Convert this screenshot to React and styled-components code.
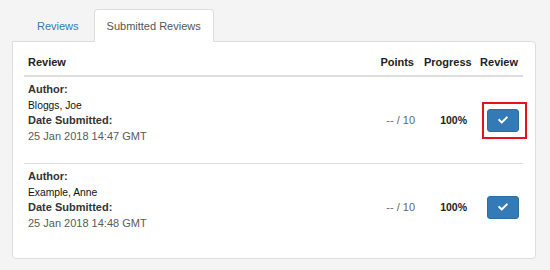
import React from "react";
import styled, { createGlobalStyle } from "styled-components";

const GlobalStyle = createGlobalStyle`
  body {
    margin: 0;
    background: #f4f4f4;
    font-family: "Liberation Sans", Arial, sans-serif;
    font-size: 11px;
    color: #333;
  }
`;

const Page = styled.div`
  padding: 9px 14px 0 12px;
`;

const TabList = styled.div`
  display: flex;
  gap: 2px;
  padding-left: 12px;
`;

const Tab = styled.div`
  position: relative;
  z-index: 1;
  height: 33px;
  box-sizing: border-box;
  padding: 0 12px;
  display: flex;
  align-items: center;
  margin-bottom: -1px;
  border: 1px solid ${(p) => (p.$active ? "#ddd" : "transparent")};
  border-bottom-color: ${(p) => (p.$active ? "#fff" : "transparent")};
  border-radius: 4px 4px 0 0;
  background: ${(p) => (p.$active ? "#fff" : "transparent")};
  color: ${(p) => (p.$active ? "#555" : "#337ab7")};
`;

const Panel = styled.div`
  background: #fff;
  border: 1px solid #ddd;
  border-radius: 0 4px 4px 4px;
  padding: 8px 12px 8px 11px;
`;

const Table = styled.div`
  display: grid;
  grid-template-columns: 1fr 43px 57px 47px;
`;

const HeadCell = styled.div`
  padding: 5px ${(p) => (p.$right ? "5px" : "0")} 5px ${(p) => (p.$right ? "0" : "4px")};
  line-height: 15px;
  font-weight: bold;
  color: #222;
  text-align: ${(p) => (p.$right ? "right" : "left")};
  border-bottom: 2px solid #ddd;
  white-space: nowrap;
`;

const HeadLeft = styled(HeadCell)`
  padding-left: ${(p) => (p.$pad ? p.$pad : "4px")};
  text-align: left;
`;

const Cell = styled.div`
  display: flex;
  align-items: center;
  justify-content: flex-end;
  padding-right: ${(p) => p.$pr || "4px"};
  border-bottom: ${(p) => (p.$last ? "none" : "1px solid #ddd")};
`;

const InfoCell = styled.div`
  padding: 5px 0 19px 4px;
  line-height: 15.5px;
  border-bottom: ${(p) => (p.$last ? "none" : "1px solid #ddd")};
`;

const Label = styled.div`
  font-weight: bold;
  color: #333;
`;

const Name = styled.div`
  color: #111;
  font-size: 10.3px;
`;

const DateText = styled.div`
  color: #5a5a5a;
`;

const Points = styled.span`
  color: #666;
`;

const Progress = styled.span`
  color: #222;
  font-weight: bold;
  font-size: 10.5px;
`;

const ButtonWrap = styled.div`
  position: relative;
`;

const Highlight = styled.div`
  position: absolute;
  left: -5px;
  right: -8px;
  top: -7px;
  bottom: -7px;
  border: 2px solid #e8101a;
  pointer-events: none;
`;

const ReviewButton = styled.button`
  width: 32px;
  height: 23px;
  padding: 0;
  background: #337ab7;
  border: 1px solid #2e6da4;
  border-radius: 3px;
  display: flex;
  align-items: center;
  justify-content: center;
  cursor: pointer;
`;

const CheckIcon = () => (
  <svg width="10" height="10" viewBox="0 0 512 512" fill="#fff">
    <path d="M173.898 439.404l-166.4-166.4c-9.997-9.997-9.997-26.206 0-36.204l36.203-36.204c9.997-9.998 26.207-9.998 36.204 0L192 312.69 432.095 72.596c9.997-9.997 26.207-9.997 36.204 0l36.203 36.204c9.997 9.997 9.997 26.206 0 36.204l-294.4 294.401c-9.998 9.997-26.207 9.997-36.204-.001z" />
  </svg>
);

const reviews = [
  { author: "Bloggs, Joe", date: "25 Jan 2018 14:47 GMT", points: "-- / 10", progress: "100%", highlight: true },
  { author: "Example, Anne", date: "25 Jan 2018 14:48 GMT", points: "-- / 10", progress: "100%" },
];

const App = () => {
  return (
    <Page>
      <GlobalStyle />
      <TabList>
        <Tab>Reviews</Tab>
        <Tab $active>Submitted Reviews</Tab>
      </TabList>
      <Panel>
        <Table>
          <HeadLeft>Review</HeadLeft>
          <HeadCell $right>Points</HeadCell>
          <HeadLeft $pad="5px">Progress</HeadLeft>
          <HeadCell $right>Review</HeadCell>
          {reviews.map((r, i) => {
            const last = i === reviews.length - 1;
            return (
              <React.Fragment key={r.author}>
                <InfoCell $last={last}>
                  <Label>Author:</Label>
                  <Name>{r.author}</Name>
                  <Label>Date Submitted:</Label>
                  <DateText>{r.date}</DateText>
                </InfoCell>
                <Cell $last={last} $pr="4px">
                  <Points>{r.points}</Points>
                </Cell>
                <Cell $last={last} $pr="9px">
                  <Progress>{r.progress}</Progress>
                </Cell>
                <Cell $last={last} $pr="4px">
                  <ButtonWrap>
                    {r.highlight && <Highlight />}
                    <ReviewButton>
                      <CheckIcon />
                    </ReviewButton>
                  </ButtonWrap>
                </Cell>
              </React.Fragment>
            );
          })}
        </Table>
      </Panel>
    </Page>
  );
};

export default App;
